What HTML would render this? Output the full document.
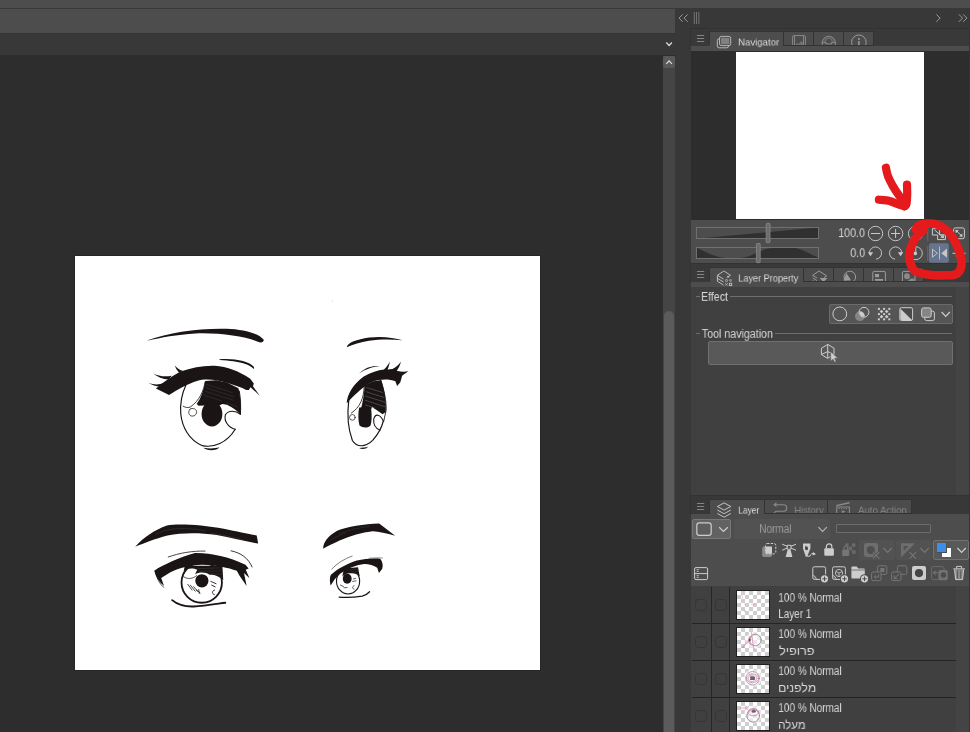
<!DOCTYPE html>
<html>
<head>
<meta charset="utf-8">
<title>Clip Studio Paint</title>
<style>
*{box-sizing:border-box;margin:0;padding:0}
html,body{width:970px;height:732px;overflow:hidden;background:#2d2d2d}
body{position:relative;font-family:"Liberation Sans","DejaVu Sans",sans-serif;font-size:11px;color:#dcdcdc}
.a{position:absolute}
.t{position:absolute;left:0;top:0;white-space:nowrap;line-height:16px;transform-origin:0 0;will-change:transform}
svg{position:absolute;overflow:visible}
.tab{position:absolute;background:#4c4c4c;box-shadow:0 0 0 1px #333}
.tabA{position:absolute;background:#4d4d4d;box-shadow:-1px -1px 0 0 #343434}
.row{position:absolute;left:692px;width:264px;height:37px;border-bottom:1px solid #242424}
.cb{position:absolute;width:11.6px;height:11.6px;border:1.4px solid #353535;border-radius:3.5px;top:12.2px}
.th{position:absolute;left:44px;top:3px;width:34px;height:30px;border:1px solid #1f1f1f;background-color:#fff;
 background-image:linear-gradient(45deg,#cfcfcf 25%,transparent 25%,transparent 75%,#cfcfcf 75%),linear-gradient(45deg,#cfcfcf 25%,transparent 25%,transparent 75%,#cfcfcf 75%);
 background-size:8px 8px;background-position:0 0,4px 4px}
.vl{position:absolute;top:0;width:1px;height:37px;background:#262626}
</style>
</head>
<body>
<!-- top bands -->
<div class="a" style="left:0;top:0;width:970px;height:8px;background:#4d4d4d"></div>
<div class="a" style="left:0;top:8px;width:676px;height:25px;background:#4d4d4d;border-top:1px solid #393939;border-right:1px solid #343434"></div>
<div class="a" style="left:0;top:33px;width:675px;height:22px;background:#383838;border-top:1px solid #343434"></div>
<div class="a" style="left:675px;top:8px;width:295px;height:724px;background:#383838"></div>
<!-- canvas area -->
<div class="a" style="left:0;top:55px;width:663px;height:677px;background:#2d2d2d"></div>
<div class="a" style="left:75px;top:256px;width:465px;height:414px;background:#fff;box-shadow:0 0 0 1px #262626"></div>
<svg width="970" height="732" viewBox="0 0 970 732" style="left:0;top:0"><g transform="translate(130 315) scale(0.20487)" fill="#1a1414" stroke="none"><path d="M86 123 C190 86 330 64 470 67 C560 70 630 92 652 120 C656 132 640 138 624 130 C560 104 440 86 320 90 C230 95 150 111 86 124Z"/></g><g transform="translate(145 350) scale(0.13667)" fill="#1a1414" stroke="none"><path d="M545 68 C640 58 762 78 798 124 L796 140 C770 106 700 82 545 73Z"/><g fill="none" stroke="#1a1414" stroke-linecap="round" stroke-linejoin="round"><path d="M300 255 C270 320 256 400 262 470 C272 560 320 660 420 700 C500 718 600 680 660 580" stroke-width="8.5"/><path d="M690 300 C700 360 702 420 698 470" stroke-width="7"/><path d="M440 235 C428 300 400 370 330 418 C312 424 294 420 280 412" stroke-width="6"/><path d="M330 432 C350 420 376 432 378 452 C378 476 356 488 336 482 C318 474 314 448 330 432" stroke-width="5.5"/><path d="M698 470 C664 444 612 436 588 474 C576 520 610 568 660 580" stroke-width="8"/></g><path d="M440 226 L520 222 L600 238 L684 280 C698 340 704 410 700 474 C680 450 650 424 600 400 L566 396 L544 406 L436 406 L392 408 L378 396 C410 350 432 290 440 226Z"/><g stroke="#fff" stroke-width="2.6" fill="none" opacity="0.24" stroke-linecap="round"><path d="M452 252 L640 312"/><path d="M450 276 L650 342"/><path d="M440 302 L646 368"/><path d="M430 330 L560 372"/><path d="M600 386 L672 414"/></g><ellipse cx="490" cy="468" rx="76" ry="92"/><path d="M80 281 C130 240 190 194 260 158 C340 128 430 112 510 115 C600 120 690 156 770 210 L796 246 L790 266 L842 336 L772 272 L760 292 L740 292 C680 264 600 238 530 224 C480 214 430 210 380 226 C320 244 240 286 176 330Z"/><path d="M60 172 C100 192 145 198 196 188 L172 216 C130 214 90 196 60 172Z"/><path d="M25 240 C60 254 96 256 136 244 L112 268 C80 266 50 256 25 240Z"/><path d="M218 114 C234 134 252 146 276 152 L250 166 C236 152 225 135 218 114Z"/><path d="M428 716 C470 722 510 722 544 712 C530 738 450 740 428 716Z"/></g><g transform="translate(330 325) scale(0.17762)" fill="#1a1414" stroke="none"><path d="M94 125 C100 100 150 82 220 71 C290 63 360 71 409 86 C350 79 280 79 220 88 C170 96 130 110 94 125Z"/><path d="M163 273 C196 240 240 226 278 234 C240 234 200 250 163 273Z"/><g fill="none" stroke="#1a1414" stroke-linecap="round" stroke-linejoin="round"><path d="M106 420 C96 500 100 580 126 650 C150 690 200 690 240 650 C270 616 290 580 300 542" stroke-width="6.5"/><path d="M286 312 C306 370 318 430 316 480 L302 544" stroke-width="5"/><path d="M192 350 C190 410 170 464 120 496" stroke-width="4.5"/><circle cx="126" cy="520" r="16" stroke-width="4"/><path d="M300 540 C284 504 256 494 246 530 C244 560 258 584 282 592" stroke-width="6"/></g><path d="M195 342 L240 318 L288 310 C306 364 318 430 314 490 L296 502 L262 478 L236 462 L230 480 L172 480 C184 440 192 390 195 342Z"/><g stroke="#fff" stroke-width="2" fill="none" opacity="0.6" stroke-linecap="round"><path d="M206 352 L296 380"/><path d="M204 376 L304 408"/><path d="M200 400 L308 434"/><path d="M198 424 L308 460"/><path d="M200 450 L250 466"/></g><path d="M164 464 L230 462 C236 500 236 540 228 566 C214 582 182 580 166 566 C158 534 158 496 164 464Z"/><path d="M94 442 C96 390 130 334 190 290 C230 266 270 254 304 250 C318 238 328 224 337 206 C334 224 330 238 324 250 L352 248 C372 238 388 224 400 206 C394 228 386 244 376 258 C400 264 422 264 442 260 C428 268 416 276 406 286 L396 322 L378 344 L368 316 C330 302 280 304 240 320 C190 344 140 390 94 442Z"/><path d="M164 692 C182 692 200 690 216 684 C204 700 178 702 164 692Z"/></g><g transform="translate(130 515) scale(0.14433)" fill="#1a1414" stroke="none"><path d="M36 220 C90 158 170 102 256 72 C340 60 500 68 650 96 C740 114 820 132 878 142 L888 198 C800 182 700 156 600 138 C480 122 360 122 260 142 C170 166 100 194 36 220Z"/><g stroke="#fff" stroke-width="2" fill="none" opacity="0.3" stroke-linecap="round"><path d="M300 96 C380 90 450 96 520 110"/><path d="M560 126 C620 134 700 152 780 170"/><path d="M180 132 C220 114 260 102 300 98"/></g><g fill="none" stroke="#1a1414" stroke-linecap="round" stroke-linejoin="round"><circle cx="497" cy="468" r="140" stroke-width="12.5"/><path d="M292 590 C330 622 380 636 440 634 C520 630 600 616 660 608" stroke-width="13"/><path d="M372 428 C400 448 436 442 462 420" stroke-width="5"/><path d="M400 480 L430 520 M418 486 L452 528 M440 496 L470 530 M460 520 L486 540 M476 516 L480 544" stroke-width="5.5"/><path d="M560 460 L596 476 M566 486 L590 498 M586 520 C566 524 566 548 584 552" stroke-width="6"/><path d="M700 248 C770 262 820 300 846 360" stroke-width="6"/><path d="M265 291 C340 264 430 248 520 250" stroke-width="5.5"/><path d="M176 392 C184 440 204 476 234 502" stroke-width="5"/></g><path d="M380 352 L640 352 L646 450 C610 420 580 410 550 414 C530 396 480 392 450 412 L466 380 C440 366 400 366 372 388Z"/><g stroke="#fff" stroke-width="2.6" fill="none" opacity="0.24" stroke-linecap="round"><path d="M470 372 L620 366"/><path d="M480 390 L630 388"/><path d="M540 406 L636 410"/><path d="M560 424 L640 432"/></g><circle cx="498" cy="456" r="46"/><path d="M168 386 C230 346 340 294 450 264 C560 262 680 290 800 344 L822 370 L802 380 L828 438 L790 402 L808 492 L758 420 L740 386 C680 364 600 348 500 344 C420 346 340 366 280 396 L216 436 L236 492 C200 462 178 426 168 386Z"/></g><g transform="translate(315 515) scale(0.12295)" fill="#1a1414" stroke="none"><path d="M66 274 C68 220 100 176 180 128 C260 98 400 72 522 70 L652 168 C580 150 520 134 470 132 C380 140 290 168 200 208 C150 232 100 256 66 274Z"/><g stroke="#fff" stroke-width="2" fill="none" opacity="0.3" stroke-linecap="round"><path d="M200 152 C280 120 360 102 440 94"/><path d="M130 202 C170 178 210 160 250 146"/></g><g fill="none" stroke="#1a1414" stroke-linecap="round" stroke-linejoin="round"><ellipse cx="269" cy="538" rx="94" ry="104" stroke-width="9"/><path d="M196 668 C260 672 330 668 384 660 C410 652 430 640 444 624" stroke-width="10"/><path d="M136 440 C180 392 240 356 302 334" stroke-width="4.5"/><path d="M440 352 C480 348 516 348 548 350" stroke-width="4"/><path d="M206 570 L232 582 M236 592 L262 590 M306 540 L334 536 M312 520 L330 516 M318 576 C300 580 300 600 318 602" stroke-width="5.5"/></g><path d="M236 436 L350 424 L364 500 C340 476 310 470 290 474 C270 470 240 480 222 500Z"/><g stroke="#fff" stroke-width="2.4" fill="none" opacity="0.24" stroke-linecap="round"><path d="M286 446 L348 440"/><path d="M296 462 L354 460"/><path d="M312 478 L358 482"/></g><ellipse cx="262" cy="518" rx="36" ry="41"/><path d="M128 574 C118 540 120 500 130 486 C180 440 260 396 340 370 C400 356 480 350 530 356 C550 380 556 410 546 440 L520 472 L506 430 C480 408 440 398 400 398 C340 404 270 432 210 474 C170 506 146 540 128 574Z"/></g><circle cx="332.5" cy="301" r="0.6" fill="#ccc"/></svg>
<!-- scrollbar -->
<div class="a" style="left:663px;top:56px;width:12px;height:676px;background:#454545"></div>
<div class="a" style="left:663px;top:56px;width:12px;height:12px;background:#595959;border-radius:2px"></div>
<div class="a" style="left:664px;top:311px;width:10px;height:430px;background:#5b5b5b;border-radius:5px"></div>
<!-- dock -->
<div class="a" style="left:691px;top:29px;width:278px;height:234px;background:#2d2d2d"></div>
<div class="a" style="left:690px;top:28px;width:280px;height:18px;background:#393939;border-top:1px solid #323232;border-left:1px solid #323232"></div>
<div class="tabA" style="left:710px;top:32px;width:74px;height:14px"></div>
<div class="tab" style="left:784px;top:32px;width:29px;height:13px"></div>
<div class="tab" style="left:814px;top:32px;width:29px;height:13px"></div>
<div class="tab" style="left:844px;top:32px;width:29px;height:13px"></div>
<div class="a" style="left:691px;top:46px;width:278px;height:5px;background:#4d4d4d"></div>
<div class="a" style="left:736px;top:52px;width:188px;height:167px;background:#fff"></div>
<div class="a" style="left:691px;top:220px;width:278px;height:43px;background:#4d4d4d"></div>
<div class="t" style="font-size:10.3px;transform:translate(738.07px,36.01px) scale(0.9326,0.8625)">Navigator</div>
<div class="t" style="font-size:12.3px;transform:translate(838.23px,225.37px) scale(0.8667,0.9778)">100.0</div>
<div class="t" style="font-size:12.3px;transform:translate(850.30px,245.23px) scale(0.8706,0.9889)">0.0</div>

<!-- panel 2 -->
<div class="a" style="left:690px;top:263px;width:280px;height:19px;background:#393939;border-top:1px solid #323232;border-left:1px solid #323232"></div>
<div class="tabA" style="left:710px;top:268px;width:93px;height:14px"></div>
<div class="tab" style="left:804px;top:268px;width:29px;height:13px"></div>
<div class="tab" style="left:834px;top:268px;width:29px;height:13px"></div>
<div class="tab" style="left:864px;top:268px;width:29px;height:13px"></div>
<div class="tab" style="left:894px;top:268px;width:29px;height:13px"></div>
<div class="a" style="left:691px;top:282px;width:278px;height:5px;background:#4d4d4d"></div>
<div class="a" style="left:691px;top:287px;width:265px;height:208px;background:#404040"></div>
<div class="a" style="left:956px;top:287px;width:13px;height:208px;background:#444"></div>
<div class="t" style="font-size:10.3px;transform:translate(738.31px,271.70px) scale(0.8866,0.9000)">Layer Property</div>
<div class="a" style="left:696px;top:296px;width:4px;height:1px;background:#6e6e6e"></div>
<div class="a" style="left:730px;top:296px;width:222px;height:1px;background:#6e6e6e"></div>
<div class="t" style="font-size:12.3px;transform:translate(700.93px,289.07px) scale(0.8667,0.9778)">Effect</div>
<div class="a" style="left:829px;top:304px;width:124px;height:20px;background:#555;border:1px solid #6b6b6b;border-radius:2px"></div>
<div class="a" style="left:696px;top:333px;width:4px;height:1px;background:#6e6e6e"></div>
<div class="a" style="left:775px;top:333px;width:177px;height:1px;background:#6e6e6e"></div>
<div class="t" style="font-size:12.3px;transform:translate(701.80px,326.20px) scale(0.8671,0.9667)">Tool navigation</div>
<div class="a" style="left:708px;top:341px;width:245px;height:24px;background:#595959;border:1px solid #707070;border-radius:2px"></div>

<!-- panel 3 -->
<div class="a" style="left:690px;top:495px;width:280px;height:19px;background:#383838;border-top:1.5px solid #333;border-left:1px solid #323232"></div>
<div class="tabA" style="left:710px;top:500px;width:54px;height:14px"></div>
<div class="tab" style="left:765px;top:500px;width:62px;height:13px"></div>
<div class="tab" style="left:828px;top:500px;width:83px;height:13px"></div>
<div class="a" style="left:691px;top:514px;width:278px;height:72px;background:#4d4d4d"></div>
<div class="t" style="font-size:10.3px;transform:translate(738.39px,503.84px) scale(0.8080,0.8875)">Layer</div>
<div class="a" style="left:765px;top:500px;width:62px;height:13px;overflow:hidden"><div class="t" style="font-size:10.3px;transform:translate(29.29px,3.84px) scale(0.9129,0.8875);color:#858585">History</div></div>
<div class="a" style="left:828px;top:500px;width:83px;height:13px;overflow:hidden"><div class="t" style="font-size:10.3px;transform:translate(30.00px,3.84px) scale(0.9385,0.8875);color:#858585">Auto Action</div></div>
<div class="a" style="left:692px;top:519px;width:39px;height:20px;background:#626262;border:1px solid #787878;border-radius:2px"></div>
<div class="a" style="left:734px;top:519px;width:96px;height:20px;background:#525252;border-radius:2px"></div>
<div class="t" style="font-size:12.3px;transform:translate(759.18px,521.33px) scale(0.8158,0.9556);color:#9c9c9c">Normal</div>
<div class="a" style="left:836px;top:524px;width:95px;height:9px;border:1px solid #6c6c6c;border-radius:1px;background:#4a4a4a"></div>
<div class="a" style="left:859px;top:540px;width:36px;height:20px;background:#525252;border-radius:2px"></div>
<div class="a" style="left:896px;top:540px;width:36px;height:20px;background:#525252;border-radius:2px"></div>
<div class="a" style="left:933px;top:540px;width:36px;height:20px;background:#595959;border:1px solid #727272;border-radius:2px"></div>
<div class="a" style="left:942px;top:548px;width:9px;height:9px;background:#fff"></div>
<div class="a" style="left:937px;top:543px;width:10px;height:10px;background:#3b8eea;border:1px solid #4d4d4d;border-left:none;border-top:none"></div>

<!-- layer list -->
<div class="a" style="left:691px;top:586px;width:265px;height:146px;background:#404040"></div>
<div class="a" style="left:956px;top:586px;width:13px;height:146px;background:#444"></div>
<div class="row" style="top:587px"><div class="cb" style="left:3.3px"></div><div class="vl" style="left:19px"></div><div class="cb" style="left:23.3px"></div><div class="vl" style="left:37px"></div><div class="th"></div></div>
<div class="t" style="font-size:12.3px;transform:translate(778.29px,590.10px) scale(0.8132,0.9667)">100 % Normal</div>
<div class="t" style="font-size:12.3px;transform:translate(778.30px,606.13px) scale(0.8025,0.9889)">Layer 1</div>
<div class="row" style="top:624px"><div class="cb" style="left:3.3px"></div><div class="vl" style="left:19px"></div><div class="cb" style="left:23.3px"></div><div class="vl" style="left:37px"></div><div class="th"></div></div>
<div class="t" style="font-size:12.3px;transform:translate(778.29px,626.27px) scale(0.8132,0.9778)">100 % Normal</div>
<div class="t" style="font-size:12.3px;transform:translate(779.10px,643.07px) scale(1.0294,0.9778)" dir="rtl">פרופיל</div>
<div class="row" style="top:661px"><div class="cb" style="left:3.3px"></div><div class="vl" style="left:19px"></div><div class="cb" style="left:23.3px"></div><div class="vl" style="left:37px"></div><div class="th"></div></div>
<div class="t" style="font-size:12.3px;transform:translate(778.29px,663.27px) scale(0.8132,0.9778)">100 % Normal</div>
<div class="t" style="font-size:12.3px;transform:translate(778.10px,680.07px) scale(1.0000,0.9778)" dir="rtl">מלפנים</div>
<div class="row" style="top:698px"><div class="cb" style="left:3.3px"></div><div class="vl" style="left:19px"></div><div class="cb" style="left:23.3px"></div><div class="vl" style="left:37px"></div><div class="th"></div></div>
<div class="t" style="font-size:12.3px;transform:translate(778.29px,700.13px) scale(0.8132,0.9889)">100 % Normal</div>
<div class="t" style="font-size:12.3px;transform:translate(778.17px,717.08px) scale(0.9321,0.9722)" dir="rtl">מעלה</div>

<div class="a" style="left:969px;top:29px;width:1px;height:703px;background:#343434"></div>
<svg width="970" height="732" viewBox="0 0 970 732" style="left:0;top:0">
<path d="M682.7 14.4 L679 18.1 L682.7 21.8 M687.7 14.4 L684 18.1 L687.7 21.8" fill="none" stroke="#9a9a9a" stroke-width="1"/>
<rect x="693.85" y="12" width="0.7" height="12" fill="#8c8c8c"/>
<rect x="696.25" y="12" width="0.7" height="12" fill="#8c8c8c"/>
<rect x="698.55" y="12" width="0.7" height="12" fill="#8c8c8c"/>
<path d="M936.4 14.4 L940.1 18.1 L936.4 21.8" fill="none" stroke="#9a9a9a" stroke-width="1"/>
<path d="M958.9 14.4 L962.6 18.1 L958.9 21.8 M963.2 14.4 L966.9 18.1 L963.2 21.8" fill="none" stroke="#9a9a9a" stroke-width="1"/>
<path d="M666.3 42.5 L669.0999999999999 45.5 L671.9 42.5" fill="none" stroke="#dedede" stroke-width="1.2"/>
<path d="M666.3 63.9 L669.0999999999999 60.9 L671.9 63.9" fill="none" stroke="#dedede" stroke-width="1.2"/>
<rect x="697" y="35.1" width="7.2" height="0.9" fill="#8f8f8f"/><rect x="697" y="38.1" width="7.2" height="0.9" fill="#8f8f8f"/><rect x="697" y="41.1" width="7.2" height="0.9" fill="#8f8f8f"/>
<rect x="697" y="271.1" width="7.2" height="0.9" fill="#8f8f8f"/><rect x="697" y="274.1" width="7.2" height="0.9" fill="#8f8f8f"/><rect x="697" y="277.1" width="7.2" height="0.9" fill="#8f8f8f"/>
<rect x="697" y="503.1" width="7.2" height="0.9" fill="#8f8f8f"/><rect x="697" y="506.1" width="7.2" height="0.9" fill="#8f8f8f"/><rect x="697" y="509.1" width="7.2" height="0.9" fill="#8f8f8f"/>
<rect x="717.3" y="38.9" width="11.3" height="8.9" rx="1.8" fill="#4d4d4d" stroke="#c2c2c2" stroke-width="0.9"/>
<rect x="719.5" y="36.4" width="11.2" height="9.2" rx="1.8" fill="#4d4d4d" stroke="#c2c2c2" stroke-width="0.9"/>
<rect x="720.9" y="37.8" width="8.4" height="6.4" rx="0.6" fill="#808080"/>
<clipPath id="c1"><rect x="784" y="32" width="90" height="13"/></clipPath><g clip-path="url(#c1)">
<rect x="792.6" y="35.6" width="12.8" height="14" rx="1.2" fill="none" stroke="#8e8e8e" stroke-width="0.9"/><path d="M794.5 36 V46 M803.5 36 V46" stroke="#8e8e8e" stroke-width="0.9"/>
<path d="M795 45 L797 43 L798.5 44 L801 41 L803 42.5 L803 46 L795 46Z" fill="#707070"/>
<circle cx="828.8" cy="43" r="6.7" fill="#5e5e5e" stroke="#8e8e8e" stroke-width="0.9"/><circle cx="828.8" cy="41.6" r="3.3" fill="#4c4c4c" stroke="#7e7e7e" stroke-width="0.7"/>
<path d="M822.4 47 V42.4 H825.8 V43.9 H831.8 V42.4 H835.2 V47" fill="#4c4c4c" stroke="#8e8e8e" stroke-width="0.9"/>
<circle cx="858.9" cy="42.3" r="7.3" fill="none" stroke="#9b9b9b" stroke-width="1"/>
<circle cx="858.9" cy="38.9" r="1" fill="#9b9b9b"/><rect x="858.1" y="41.2" width="1.6" height="6" fill="#9b9b9b"/>
</g>
<rect x="696.5" y="227.5" width="122" height="11" fill="#4d4d4d" stroke="#707070" stroke-width="1"/>
<path d="M704 238 L812 228 L818 228 L818 238Z" fill="#303030"/>
<rect x="766.2" y="223.3" width="3.8" height="19.4" rx="0.8" fill="#6b6b6b" stroke="#8a8a8a" stroke-width="0.8"/>
<rect x="696.5" y="247.5" width="122" height="11" fill="#4d4d4d" stroke="#707070" stroke-width="1"/>
<path d="M697 248 C708 253 716 257.6 726 258 L697 258Z" fill="#303030"/>
<path d="M740 258 C752 257.6 760 248.5 773 248 L796 248 C804 250 810 254 818 257.6 L818 258Z" fill="#303030"/>
<rect x="756.4" y="243.5" width="3.8" height="19.2" rx="0.8" fill="#6b6b6b" stroke="#8a8a8a" stroke-width="0.8"/>
<circle cx="875.5" cy="233.5" r="7.2" fill="none" stroke="#c9c9c9" stroke-width="0.95"/>
<circle cx="895.6" cy="233.5" r="7.2" fill="none" stroke="#c9c9c9" stroke-width="0.95"/>
<circle cx="915.6" cy="233.5" r="7.2" fill="none" stroke="#c9c9c9" stroke-width="0.95"/>
<path d="M870.8 233.5 H880.1 M891 233.5 H900.2 M895.6 228.9 V238.1" stroke="#c9c9c9" stroke-width="1" fill="none"/>
<rect x="927.3" y="228.5" width="1" height="12.5" fill="#6c6c6c"/><rect x="927.3" y="246" width="1" height="15" fill="#6c6c6c"/>
<path d="M932.4 228.6 H939.6 V234.8 H945.4 V239.6 H937.6 V235 H932.4Z" fill="none" stroke="#cdcdcd" stroke-width="1" stroke-linejoin="round"/>
<path d="M934.4 229.8 L942.6 236.8" fill="none" stroke="#cdcdcd" stroke-width="1"/><path d="M944.2 238.2 L940.2 237.6 L943.4 234.4Z" fill="#cdcdcd"/>
<rect x="953.6" y="227.9" width="10.8" height="10.8" rx="1.8" fill="none" stroke="#cdcdcd" stroke-width="1"/>
<path d="M956.4 230.8 L961.6 235.8" fill="none" stroke="#cdcdcd" stroke-width="1"/><path d="M955.4 229.8 L958.8 230.2 L955.8 233.2Z M962.6 236.8 L959.2 236.4 L962.2 233.4Z" fill="#cdcdcd"/>
<path d="M869.4 252.6 A6.1 6.1 0 1 1 876 259.1" fill="none" stroke="#c9c9c9" stroke-width="0.95"/>
<path d="M867.8 252.2 L873.2 252.2 L870.5 256.3Z" fill="#c9c9c9"/>
<path d="M901.7 252.6 A6.1 6.1 0 1 0 895.1 259.1" fill="none" stroke="#c9c9c9" stroke-width="0.95"/>
<path d="M903.3 252.2 L897.9 252.2 L900.6 256.3Z" fill="#c9c9c9"/>
<circle cx="915.8" cy="253.2" r="6.5" fill="none" stroke="#c9c9c9" stroke-width="0.95"/><circle cx="915.3" cy="253.4" r="1.8" fill="#c9c9c9"/><path d="M915.8 246.8 V252" stroke="#c9c9c9" stroke-width="0.9"/>
<rect x="929" y="243.3" width="19.8" height="19.4" rx="2" fill="#66748f"/>
<path d="M932.5 249.2 L937.3 253.2 L932.5 257.2Z" fill="none" stroke="#cdcdcd" stroke-width="0.9"/>
<path d="M947 248.6 L941.3 253.2 L947 257.8Z" fill="#c6c6c6"/>
<rect x="939.1" y="246.6" width="0.9" height="12.8" fill="#c6c6c6"/>
<rect x="952.5" y="252.8" width="13" height="1" fill="#cdcdcd"/>
<path d="M955.5 251 L959 246.5 L962.5 251Z" fill="none" stroke="#cdcdcd" stroke-width="1"/><path d="M955.5 255.6 L959 260 L962.5 255.6Z" fill="#cdcdcd"/>
<path d="M717.4 275.3 L723.2 271.4 Q723.9 270.9 724.6 271.4 L730.5 275.3 L727.6 277.3 M717.4 275.3 L723.6 279.1 M717.4 275.3 V281.3 M717.4 278.3 L723.6 282.1 M717.4 281.3 L723.6 285.1" fill="none" stroke="#c2c2c2" stroke-width="0.95" stroke-linejoin="round"/>
<path d="M726.4 277.4 L729.6 277.2 L728 275.6Z" fill="#c2c2c2"/>
<circle cx="726.5" cy="280.5" r="1.1" fill="none" stroke="#c2c2c2" stroke-width="0.8"/><circle cx="730.5" cy="280.5" r="1.45" fill="#8a8a8a"/>
<path d="M725.3 283.2 l2.4 2.4 m0 -2.4 l-2.4 2.4" stroke="#c2c2c2" stroke-width="0.8"/><rect x="729.4" y="283.3" width="2.3" height="2.3" fill="none" stroke="#c2c2c2" stroke-width="0.9"/>
<clipPath id="c2"><rect x="804" y="268" width="120" height="13"/></clipPath><g clip-path="url(#c2)">
<path d="M812.6 275.4 L819 271 L826.6 275.8 L824 277.6 M812.6 275.4 L817 278 M812.8 278 L817 280.6 M812.8 280.4 L816 282.4" fill="none" stroke="#9b9b9b" stroke-width="1"/>
<path d="M819.5 278 H827.5 L823.5 282Z" fill="#9b9b9b"/>
<circle cx="849.8" cy="277" r="5.8" fill="none" stroke="#9b9b9b" stroke-width="1"/><path d="M846.4 273 L843.6 280.6 H850.6 V279.4Z" fill="#9b9b9b"/>
<rect x="872.8" y="271.4" width="12.6" height="13" rx="1.4" fill="none" stroke="#9b9b9b" stroke-width="1"/><rect x="875" y="274" width="4" height="3.2" fill="#9b9b9b"/><rect x="875" y="279" width="8" height="1.8" fill="#9b9b9b"/>
<rect x="902.4" y="271.4" width="12.6" height="13" rx="1.4" fill="none" stroke="#9b9b9b" stroke-width="1"/><circle cx="907" cy="276.2" r="2.9" fill="#8a8a8a"/><path d="M907 281.5 L911 278.6 H914.5 V281.5Z" fill="#8a8a8a"/>
</g>
<circle cx="839.8" cy="313.9" r="6.9" fill="none" stroke="#cdcdcd" stroke-width="1"/>
<circle cx="859.9" cy="316.2" r="4.9" fill="#858585"/><circle cx="864" cy="312.2" r="4.9" fill="#555" stroke="#cdcdcd" stroke-width="1"/>
<clipPath id="c3"><circle cx="859.9" cy="316.2" r="4.9"/></clipPath><circle cx="864" cy="312.2" r="4.5" fill="#cdcdcd" clip-path="url(#c3)"/>
<rect x="877.9" y="307.9" width="2" height="2" fill="#cdcdcd"/>
<rect x="877.9" y="313.1" width="2" height="2" fill="#cdcdcd"/>
<rect x="877.9" y="318.3" width="2" height="2" fill="#cdcdcd"/>
<rect x="883.1" y="307.9" width="2" height="2" fill="#cdcdcd"/>
<rect x="883.1" y="313.1" width="2" height="2" fill="#cdcdcd"/>
<rect x="883.1" y="318.3" width="2" height="2" fill="#cdcdcd"/>
<rect x="888.3" y="307.9" width="2" height="2" fill="#cdcdcd"/>
<rect x="888.3" y="313.1" width="2" height="2" fill="#cdcdcd"/>
<rect x="888.3" y="318.3" width="2" height="2" fill="#cdcdcd"/>
<rect x="880.2" y="310.2" width="2.6" height="2.6" fill="#cdcdcd" transform="rotate(45 881.5 311.5)"/>
<rect x="880.2" y="315.4" width="2.6" height="2.6" fill="#cdcdcd" transform="rotate(45 881.5 316.7)"/>
<rect x="885.4" y="310.2" width="2.6" height="2.6" fill="#cdcdcd" transform="rotate(45 886.7 311.5)"/>
<rect x="885.4" y="315.4" width="2.6" height="2.6" fill="#cdcdcd" transform="rotate(45 886.7 316.7)"/>
<rect x="899.8" y="307.7" width="12.8" height="12.8" rx="1.6" fill="#4a4a4a" stroke="#cdcdcd" stroke-width="1"/>
<path d="M900.3 308.4 L912 320 H901.6 Q900.3 320 900.3 318.8Z" fill="#cdcdcd"/>
<rect x="924.8" y="311.2" width="9.6" height="9.4" rx="1.8" fill="#555" stroke="#cdcdcd" stroke-width="1"/>
<rect x="921.6" y="307.9" width="9.6" height="9.4" rx="1.8" fill="#858585" stroke="#cdcdcd" stroke-width="1"/>
<path d="M941.6 312 L945.7 316.4 L949.8 312" fill="none" stroke="#cdcdcd" stroke-width="1.2"/>
<path d="M821.4 348.2 L827.8 344.4 L834 348.2 V354.6 L827.6 358.4 L821.4 354.6Z M827.7 344.6 V351.6 M821.6 354.4 L827.7 351.6 L834 354.4 M827.7 351.6 V358" fill="none" stroke="#cdcdcd" stroke-width="1" stroke-linejoin="round"/>
<path d="M830.6 351.8 L837.8 358 L834.6 358.4 L836.2 361.6 L834.6 362.2 L833 359.2 L830.8 361.2Z" fill="#cdcdcd" stroke="#595959" stroke-width="0.6"/>
<path d="M724.1 502.9 L730.8 506.5 L724.1 510.1 L717.4 506.5Z M717.4 510 L724.1 513.7 L730.8 510 M717.4 513.5 L724.1 517.2 L730.8 513.5" fill="none" stroke="#c4c4c4" stroke-width="1" stroke-linejoin="round"/>
<clipPath id="c4"><rect x="765" y="500" width="146" height="13"/></clipPath><g clip-path="url(#c4)">
<path d="M775 504.7 H783.4 A3.3 3.3 0 0 1 783.4 511.3 H776.8 A2.7 2.7 0 0 0 774.1 514 V516" fill="none" stroke="#8a8a8a" stroke-width="1.1"/><path d="M773.2 504.7 L776.4 502.3 V507.1Z" fill="#8a8a8a"/>
<path d="M836.2 505.6 L849.6 502.7" fill="none" stroke="#8a8a8a" stroke-width="1.4"/><path d="M836.7 507 H849.4 V516 M836.7 507 V516" fill="none" stroke="#8a8a8a" stroke-width="1.1"/><path d="M838.6 508.6 h1.2 M841 508.6 h1.2 M843.4 508.6 h1.2 M845.8 508.6 h1.2" stroke="#8a8a8a" stroke-width="0.9"/><path d="M841.6 510.6 L845.4 511 L842.2 513.6Z" fill="#8a8a8a"/>
</g>
<rect x="696.8" y="522.8" width="14.4" height="12.6" rx="2.6" fill="#5e5e5e" stroke="#cdcdcd" stroke-width="1.2"/>
<path d="M719.2 527.2 L723.5 531.4 L727.8 527.2" fill="none" stroke="#cdcdcd" stroke-width="1.2"/>
<path d="M818.4 527.2 L822.5999999999999 531.4 L826.8 527.2" fill="none" stroke="#b4b4b4" stroke-width="1.2"/>
<rect x="762.2" y="546.6" width="9.8" height="10.4" rx="1.8" fill="#8a8a8a"/>
<rect x="765.6" y="546.6" width="6.4" height="7" fill="#cdcdcd"/>
<rect x="765.4" y="543.5" width="10.4" height="10.4" rx="1.8" fill="none" stroke="#cdcdcd" stroke-width="1" stroke-dasharray="2.2 1.4"/>
<path d="M787.6 550 H790.6 L792.4 557 H785.6Z" fill="#cdcdcd"/><rect x="787.2" y="545.2" width="3.8" height="4" rx="0.6" fill="none" stroke="#cdcdcd" stroke-width="1.1"/>
<path d="M782.2 544.2 L787 546.2 M782.2 550.2 L787 548.2 M796 544.2 L791.2 546.2 M796 550.2 L791.2 548.2" stroke="#cdcdcd" stroke-width="1" fill="none"/>
<path d="M803 543.4 H810.4 V548.6 L807.4 556 H805.6 L803 548.6Z" fill="#cdcdcd"/><path d="M805 549.2 Q804.6 546.6 805.8 545.6 Q806.4 547.2 807 546.2 Q808.6 547.6 808 549.6 Q806.6 551 805 549.2Z" fill="#4d4d4d"/>
<path d="M805.6 556.2 H810 Q811 552.6 814.6 553.6" fill="none" stroke="#cdcdcd" stroke-width="1"/><path d="M813 552 L816 554.2 L812.6 555.4Z" fill="#cdcdcd"/>
<rect x="824.3" y="548.2" width="9.6" height="7.6" rx="1" fill="#cdcdcd"/><path d="M826.4 548.4 V546.6 A2.7 2.7 0 0 1 831.8 546.6 V548.4" fill="none" stroke="#cdcdcd" stroke-width="1.2"/>
<rect x="842.2" y="549.6" width="7" height="6.4" rx="0.8" fill="#767676"/><path d="M843.8 549.8 V548.4 A1.9 1.9 0 0 1 847.6 548.4 V549.8" fill="none" stroke="#767676" stroke-width="1.1"/>
<rect x="845.2" y="543.4" width="3.4" height="3.4" fill="#6a6a6a"/>
<rect x="852" y="543.4" width="3.4" height="3.4" fill="#6a6a6a"/>
<rect x="848.6" y="546.8" width="3.4" height="3.4" fill="#6a6a6a"/>
<rect x="852" y="550.2" width="3.4" height="3.4" fill="#6a6a6a"/>
<rect x="848.6" y="546.8" width="3.4" height="3.4" fill="#6a6a6a"/>
<rect x="852" y="550.6" width="3.4" height="3.4" fill="#676767"/>
<rect x="864" y="543" width="14" height="14" rx="2.4" fill="#6e6e6e"/><circle cx="870.8" cy="550" r="4" fill="#505050"/>
<path d="M873 552.2 L879.4 558.6 M879.4 552.2 L873 558.6" stroke="#525252" stroke-width="2.6"/><path d="M873 552.2 L879.4 558.6 M879.4 552.2 L873 558.6" stroke="#767676" stroke-width="1.1"/>
<path d="M883.4 548 L887.5999999999999 552.4 L891.8 548" fill="none" stroke="#767676" stroke-width="1.2"/>
<path d="M901 543.2 H915 L901 557.2Z" fill="#6e6e6e"/><path d="M903.6 546 H908.6 L903.6 551Z" fill="#525252"/>
<path d="M909.6 552.2 L916 558.6 M916 552.2 L909.6 558.6" stroke="#525252" stroke-width="2.6"/><path d="M909.6 552.2 L916 558.6 M916 552.2 L909.6 558.6" stroke="#767676" stroke-width="1.1"/>
<path d="M920.4 548 L924.5999999999999 552.4 L928.8 548" fill="none" stroke="#767676" stroke-width="1.2"/>
<path d="M957.4 548 L961.5999999999999 552.4 L965.8 548" fill="none" stroke="#cdcdcd" stroke-width="1.2"/>
<rect x="694.6" y="567.6" width="13" height="12" rx="1.4" fill="none" stroke="#cdcdcd" stroke-width="1"/><path d="M694.6 573.6 H707.6" stroke="#cdcdcd" stroke-width="1"/>
<path d="M696.6 569.6 h2.2 M696.6 571.4 h2.2 M696.6 575.6 h2.2 M696.6 577.4 h2.2" stroke="#cdcdcd" stroke-width="0.8"/>
<rect x="812.8" y="566.8" width="12.8" height="12.6" rx="1.6" fill="none" stroke="#cdcdcd" stroke-width="1"/><path d="M813 575.4 Q815.6 576 816.6 579.4" fill="none" stroke="#cdcdcd" stroke-width="0.9"/><path d="M813.4 576.6 L816 579.2 H813.4Z" fill="#8a8a8a"/>
<circle cx="824.5" cy="578.8" r="4.6" fill="#4d4d4d"/><circle cx="824.5" cy="578.8" r="3.6" fill="#cdcdcd"/><path d="M822.3 578.8 H826.7 M824.5 576.5999999999999 V581.0" stroke="#4d4d4d" stroke-width="1" fill="none"/>
<rect x="832.6" y="566.8" width="12.8" height="12.6" rx="1.6" fill="none" stroke="#cdcdcd" stroke-width="1"/><path d="M832.8 575.4 Q835.4 576 836.4 579.4" fill="none" stroke="#cdcdcd" stroke-width="0.9"/><path d="M833.2 576.6 L835.8 579.2 H833.2Z" fill="#8a8a8a"/>
<circle cx="839" cy="573" r="3.6" fill="none" stroke="#cdcdcd" stroke-width="0.9"/><path d="M836 571.6 L839 573 L842 571.6 M839 573 V576.4" fill="none" stroke="#cdcdcd" stroke-width="0.8"/>
<circle cx="844.5" cy="578.8" r="4.6" fill="#4d4d4d"/><circle cx="844.5" cy="578.8" r="3.6" fill="#cdcdcd"/><path d="M842.3 578.8 H846.7 M844.5 576.5999999999999 V581.0" stroke="#4d4d4d" stroke-width="1" fill="none"/>
<path d="M851.4 567.6 Q851.4 566.4 852.6 566.4 H856.6 L858.4 568.4 H863.6 Q864.8 568.4 864.8 569.6 V577.4 Q864.8 578.6 863.6 578.6 H852.6 Q851.4 578.6 851.4 577.4Z" fill="#cdcdcd"/><path d="M851.4 570 H864.8" stroke="#4d4d4d" stroke-width="0.7"/>
<circle cx="864.5" cy="578.8" r="4.6" fill="#4d4d4d"/><circle cx="864.5" cy="578.8" r="3.6" fill="#cdcdcd"/><path d="M862.3 578.8 H866.7 M864.5 576.5999999999999 V581.0" stroke="#4d4d4d" stroke-width="1" fill="none"/>
<rect x="877.4" y="565.8" width="9.4" height="8.6" rx="1.4" fill="none" stroke="#767676" stroke-width="1"/><rect x="880.4" y="568" width="4" height="4" fill="#767676"/>
<rect x="871.6" y="572" width="9.4" height="8.6" rx="1.4" fill="#4d4d4d" stroke="#767676" stroke-width="1"/><path d="M878.6 574.4 V577 H874.4 M876 575.4 L874.2 577 L876 578.6" fill="none" stroke="#767676" stroke-width="1"/>
<rect x="897.4" y="565.8" width="9.4" height="8.6" rx="1.4" fill="none" stroke="#767676" stroke-width="1"/>
<rect x="891.6" y="572" width="9.4" height="8.6" rx="1.4" fill="#4d4d4d" stroke="#767676" stroke-width="1"/><path d="M899 574 L894.4 578.4 M894.2 575.4 V578.6 H897.4" fill="none" stroke="#767676" stroke-width="1"/>
<rect x="912" y="566" width="14" height="14" rx="2" fill="#cdcdcd"/><circle cx="919" cy="573.1" r="4.1" fill="#454545"/>
<rect x="931.6" y="566.6" width="12.4" height="13" rx="1.4" fill="none" stroke="#6a6a6a" stroke-width="1"/>
<rect x="938.4" y="570" width="9.4" height="10.2" rx="1.8" fill="#727272"/><circle cx="943.4" cy="575" r="2.7" fill="#4d4d4d"/><path d="M933.6 572.8 H938 M935.6 570.8 L933.4 572.8 L935.6 574.8" fill="none" stroke="#727272" stroke-width="1.1"/>
<path d="M953.4 568.9 H964.8" stroke="#cdcdcd" stroke-width="1.1"/><path d="M956.6 568.6 V566.4 H961.6 V568.6" fill="none" stroke="#cdcdcd" stroke-width="1"/>
<path d="M954.6 569.4 L955.6 579.6 H962.6 L963.6 569.4" fill="#8a8a8a" stroke="#cdcdcd" stroke-width="1"/><path d="M957.5 570.6 V578.4 M960.7 570.6 V578.4" stroke="#5a5a5a" stroke-width="1"/>
<g fill="none" stroke-width="0.7" stroke-linecap="round">
<path d="M741.6 595.4 l1.2 1.4 l-0.8 1.2 M744.6 604.4 l1 0.2 M751.6 604.4 h3.6 M744.4 611.6 l1.4 -1.2" stroke="#e9a3cf"/>
<ellipse cx="754" cy="640.4" rx="8" ry="9" fill="#fff" stroke="none" opacity="0.55"/>
<circle cx="755.4" cy="640" r="5.8" stroke="#6a6a6a"/>
<path d="M751.6 632.6 C752 638 752.8 644 754.2 649.6 M742.2 647.4 C746 644.6 749 640.6 751.2 636.4 M742.2 647.4 h2 M749.6 636.6 C747.8 639 748.2 642.4 750.6 644.6" stroke="#dc6fb3"/>
<ellipse cx="749.7" cy="640" rx="1" ry="1.6" fill="#555" stroke="none"/>
<ellipse cx="752.6" cy="678.2" rx="9" ry="9" fill="#fff" stroke="none" opacity="0.55"/>
<circle cx="752.6" cy="678.3" r="6.8" stroke="#8a8a8a"/>
<ellipse cx="752.6" cy="678.3" rx="6.2" ry="4.4" stroke="#dc6fb3"/><ellipse cx="752.6" cy="678.3" rx="4.4" ry="3.2" stroke="#dc6fb3" stroke-width="0.5"/>
<rect x="750.6" y="676.8" width="4" height="3" fill="#666" stroke="#444" stroke-width="0.5"/>
<ellipse cx="753" cy="714.6" rx="9" ry="9" fill="#fff" stroke="none" opacity="0.55"/>
<circle cx="753.2" cy="715.8" r="6.3" stroke="#6a6a6a"/>
<ellipse cx="753.4" cy="712.2" rx="5.4" ry="3.6" stroke="#dc6fb3" stroke-width="0.9"/>
<ellipse cx="753.8" cy="711.4" rx="2.2" ry="1.3" fill="#666" stroke="none"/>
<path d="M740.6 708 h1 M742.6 708 h3 l1.6 1.2" stroke="#dc6fb3"/>
</g>
<g fill="none" stroke="#e51a1c" stroke-linecap="round" stroke-linejoin="round">
<path d="M885.9 167.7 C886.2 169.1 886.8 173.2 888.0 176.3 C889.2 179.4 891.0 182.8 892.9 186.1 C894.8 189.4 897.3 193.1 899.4 196.0 C901.5 198.9 904.2 202.2 905.2 203.4" stroke-width="8.2"/>
<path d="M878.9 199.7 C880.7 199.9 886.5 200.2 889.6 200.9 C892.8 201.7 895.3 203.3 897.8 204.2 C900.2 205.1 903.2 205.9 904.3 206.2" stroke-width="8.2"/>
<path d="M907.0 184.5 C907.0 186.1 907.3 191.0 907.2 194.3 C907.1 197.6 906.9 202.2 906.4 204.2 C905.9 206.2 904.6 205.9 904.3 206.2" stroke-width="8.2"/>
<path d="M923.6 229.8 C922.9 230.4 921.2 231.6 919.6 233.4 C918.0 235.2 915.7 237.2 914.0 240.5 C912.3 243.8 909.9 249.2 909.3 253.0 C908.7 256.8 909.4 260.1 910.4 263.2 C911.4 266.3 912.4 269.5 915.5 271.4 C918.6 273.3 924.0 274.0 928.8 274.7 C933.6 275.4 939.6 275.4 944.2 275.3 C948.8 275.2 953.6 275.7 956.5 274.0 C959.4 272.3 960.9 268.8 961.4 265.3 C961.9 261.8 961.1 257.4 959.8 253.0 C958.5 248.6 955.7 242.4 953.4 238.6 C951.1 234.8 948.9 232.2 946.2 229.9 C943.5 227.6 940.4 225.6 937.0 224.5 C933.6 223.4 928.7 223.4 925.7 223.6 C922.7 223.8 920.7 224.4 919.0 225.4 C917.3 226.4 916.2 228.9 915.6 229.6" stroke-width="8.6"/>
</g>
</svg>
</body>
</html>
